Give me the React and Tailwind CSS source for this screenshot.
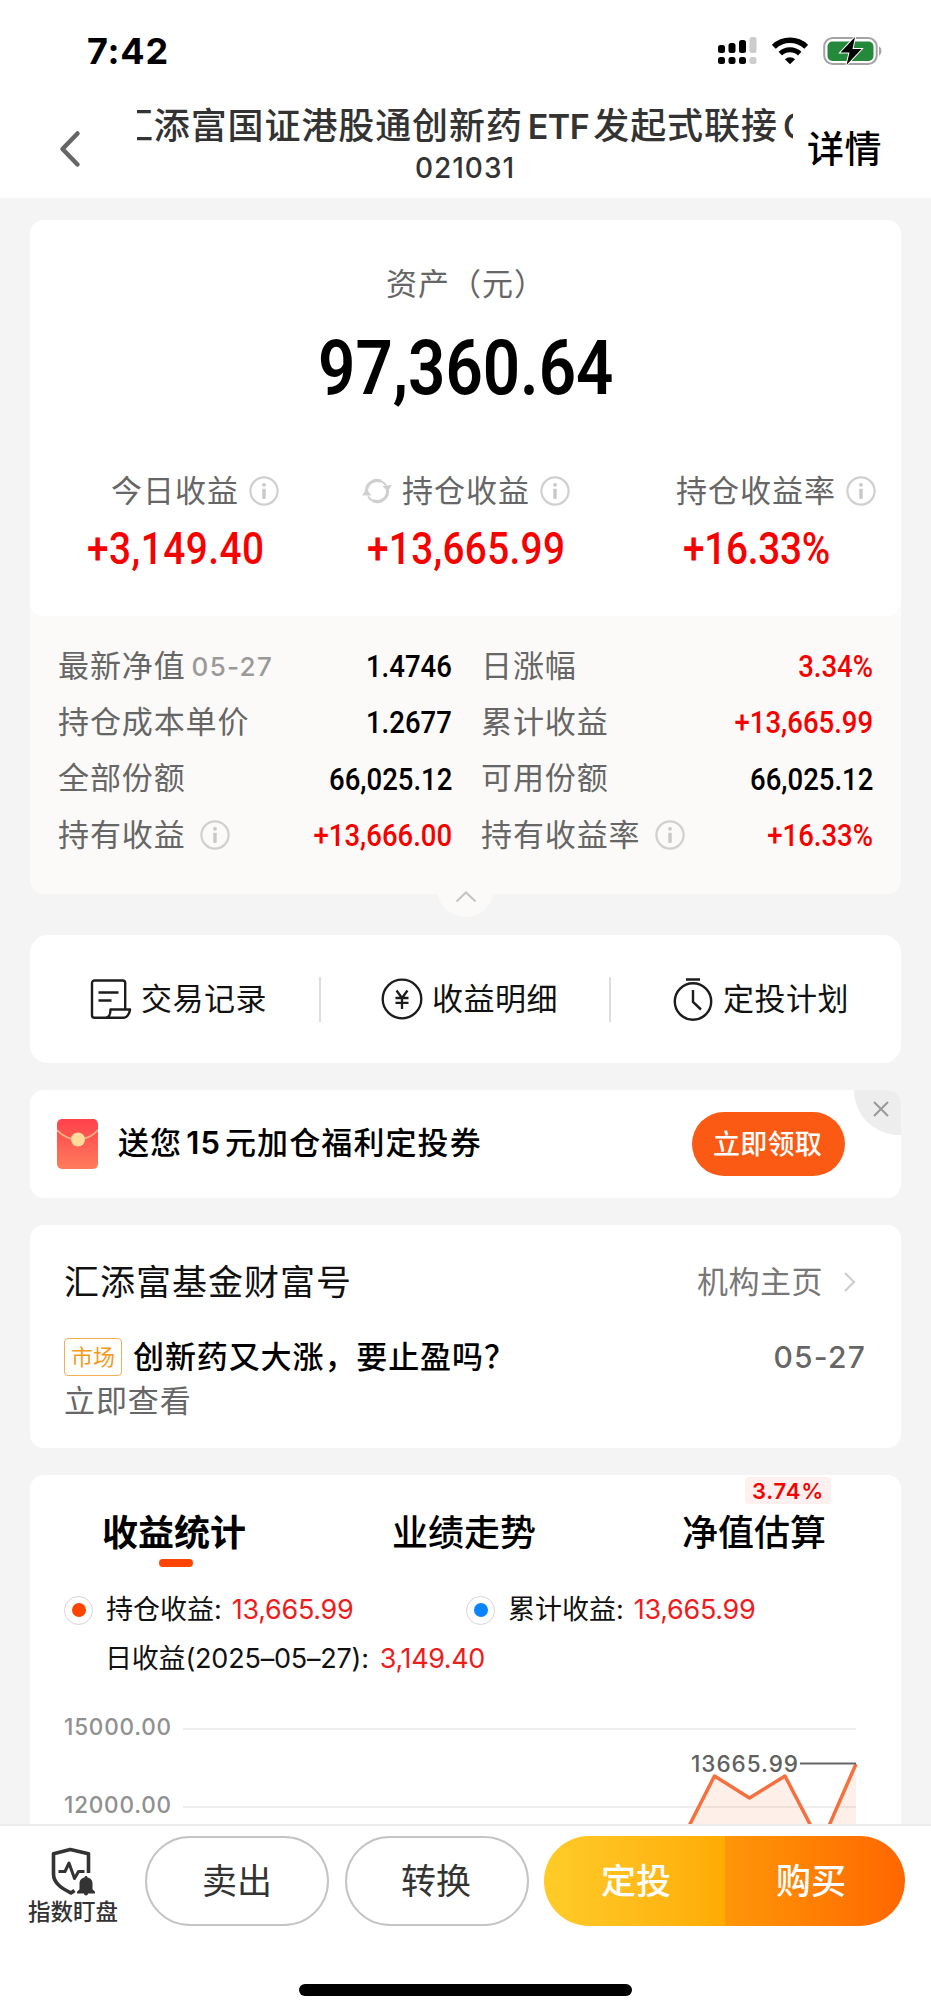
import React from "react";

const InfoIcon = ({ className = "" }) => (
  <svg className={`shrink-0 ${className}`} width="30" height="30" viewBox="0 0 30 30" fill="none">
    <circle cx="15" cy="15" r="13.6" stroke="#d0d0d0" strokeWidth="2.2" />
    <circle cx="15" cy="8.8" r="1.9" fill="#c8c8c8" />
    <path d="M15 12.8v10" stroke="#c8c8c8" strokeWidth="3.4" />
  </svg>
);

const RefreshIcon = () => (
  <svg className="shrink-0" width="30" height="28" viewBox="0 0 30 28" fill="none">
    <path d="M4.500 14A10.500 10.500 0 0 1 19 4.200" stroke="#cfcfcf" strokeWidth="3.200" />
    <path d="M19 4.200A10.500 10.500 0 0 1 24 8.500" stroke="#cfcfcf" strokeWidth="2" />
    <path d="M25.500 13A10.500 10.500 0 0 1 11 23.800" stroke="#cfcfcf" strokeWidth="3.200" />
    <path d="M11 23.800A10.500 10.500 0 0 1 6 19.500" stroke="#cfcfcf" strokeWidth="2" />
    <path d="M0 18.500 4.500 12l5 6.500zM20.500 9l9.500-1-4.500 6.500z" fill="#cfcfcf" />
  </svg>
);

// Numbers set in a narrow DIN-like face
const Num = ({ children, className = "" }) => (
  <span className={`inline-block scale-x-[0.86] whitespace-nowrap font-[Roboto,sans-serif] font-medium ${className}`}>
    {children}
  </span>
);

const StatusBar = () => (
  <div className="flex h-[102px] items-center justify-between pr-[49px] pl-[87px]">
    <span className="text-[36px] font-bold leading-none tracking-[0.800px] text-black">7:42</span>
    <div className="flex items-center">
      <svg width="40" height="30" viewBox="0 0 40 30">
        <rect x="1" y="9" width="7" height="8" rx="2.500" />
        <rect x="11.500" y="7" width="7" height="10" rx="2.500" />
        <rect x="22" y="4" width="7" height="13" rx="2.500" />
        <rect x="32.500" y="1" width="7" height="16" rx="2.500" fill="#ccc" />
        <rect x="1" y="21" width="7" height="7" rx="2.500" />
        <rect x="11.500" y="21" width="7" height="7" rx="2.500" />
        <rect x="22" y="21" width="7" height="7" rx="2.500" />
        <rect x="32.500" y="21" width="7" height="7" rx="2.500" fill="#ccc" />
      </svg>
      <svg className="ml-[15px]" width="36" height="28" viewBox="0 0 36 28" fill="none" stroke="#000">
        <path d="M1.800 9.800a23.500 23.500 0 0 1 32.400 0" strokeWidth="5.600" />
        <path d="M8.300 16.600a14 14 0 0 1 19.400 0" strokeWidth="5" />
        <path d="M12.900 22.300a7.500 7.500 0 0 1 10.200 0L18 27.300z" fill="#000" stroke="none" />
      </svg>
      <svg className="ml-[15px]" width="59" height="30" viewBox="0 0 59 30">
        <rect x="1.200" y="2" width="52.500" height="26" rx="8.500" fill="none" stroke="#a3a3a3" strokeWidth="2" />
        <rect x="4.500" y="5.500" width="46" height="19.500" rx="5" fill="#24893a" />
        <path d="M56 10.500c3.200 1.200 3.200 7.800 0 9z" fill="#a3a3a3" />
        <path d="M32 1 17.500 16.500h9L23.500 29 38.500 13h-9z" fill="#000" stroke="#fff" strokeWidth="2" paintOrder="stroke" />
      </svg>
    </div>
  </div>
);

const Header = () => (
  <div className="flex h-24 pl-[59px]">
    <svg className="mt-[28px] shrink-0" width="22" height="38" viewBox="0 0 22 38" fill="none">
      <path d="M18.500 3.500 3.500 19l15 15.500" stroke="#666" strokeWidth="4.500" strokeLinecap="round" strokeLinejoin="round" />
    </svg>
    <div className="ml-[56px] flex w-[656px] flex-col items-center overflow-hidden text-[#333]">
      <div className="flex h-[48px] w-full items-center justify-center whitespace-nowrap pr-[3px] text-[36px] font-medium tracking-[0.900px]">
        汇添富国证港股通创新药
        <span className="mr-[4px] ml-[5px] text-[34px] font-semibold tracking-[-0.500px]">ETF</span>
        发起式联接
        <span className="ml-[5px]">C</span>
      </div>
      <div className="flex h-[36px] items-center pb-px text-[28px] font-medium leading-none tracking-[1px]">021031</div>
    </div>
    <div className="mt-[23px] ml-[14px] text-[37px] font-medium leading-[50px] tracking-[0.500px] text-black">详情</div>
  </div>
);

const details = [
  { label: "最新净值", date: "05-27", value: "1.4746" },
  { label: "日涨幅", value: "3.34%", red: true },
  { label: "持仓成本单价", value: "1.2677" },
  { label: "累计收益", value: "+13,665.99", red: true },
  { label: "全部份额", value: "66,025.12" },
  { label: "可用份额", value: "66,025.12" },
  { label: "持有收益", value: "+13,666.00", red: true, info: true },
  { label: "持有收益率", value: "+16.33%", red: true, info: true },
];

const AssetCard = () => (
  <section className="relative h-[674px] rounded-[14px] bg-[#fbfaf8]">
    <div className="h-[396px] rounded-[14px] bg-white pt-[43px]">
      <div className="pl-[356px] text-[31px] leading-[42px] tracking-[1px] text-[#666]">资产（元）</div>
      <div className="mt-[17px] flex h-[92px] items-center justify-center">
        <Num className="text-[76px] leading-none font-semibold text-black">97,360.64</Num>
      </div>
      <div className="mt-[56px] flex h-[42px] items-center text-[31px] tracking-[1px] text-[#666]">
        <div className="flex w-[332px] items-center pl-[81px]">
          今日收益
          <InfoIcon className="ml-[10px]" />
        </div>
        <div className="flex w-[314px] items-center gap-[10px]">
          <RefreshIcon />
          <span>持仓收益</span>
          <InfoIcon />
        </div>
        <div className="flex items-center gap-[10px]">
          <span>持仓收益率</span>
          <InfoIcon />
        </div>
      </div>
      <div className="mt-[10px] flex h-[52px] items-center text-[45px] leading-none text-[#f60000]">
        <div className="w-[337px] pl-[57px]">
          <Num className="origin-left tracking-[0.600px]">+3,149.40</Num>
        </div>
        <div className="w-[316px]">
          <Num className="origin-left tracking-[0.400px]">+13,665.99</Num>
        </div>
        <Num className="origin-left tracking-[-0.300px]">+16.33%</Num>
      </div>
    </div>
    <div className="grid grid-cols-[394px_392px] gap-x-[29px] pt-[22px] pl-[28px]">
      {details.map((item) => (
        <div key={item.label} className="flex h-[56.300px] items-center text-[31px] tracking-[0.900px] text-[#666]">
          {item.label}
          {item.date && <span className="ml-[6px] text-[26px] font-medium tracking-[1.300px] text-[#999]">{item.date}</span>}
          {item.info && <InfoIcon className="ml-[14px]" />}
          <Num
            className={`ml-auto origin-right text-[32px] tracking-normal ${item.red ? "text-[#f60000]" : "text-black"}`}
          >
            {item.value}
          </Num>
        </div>
      ))}
    </div>
    <div className="absolute bottom-[-23px] left-[407px] flex h-[57px] w-[57px] justify-center rounded-full bg-[#fbfaf8] pt-[30px]">
      <svg width="22" height="14" viewBox="0 0 22 14" fill="none">
        <path d="m1.500 11.500 9.500-9 9.500 9" stroke="#c4c4c4" strokeWidth="2" />
      </svg>
    </div>
  </section>
);

const Shortcuts = () => (
  <section className="mt-[41px] flex h-[128px] items-center rounded-[18px] bg-white text-[31px] tracking-[0.500px] text-[#111]">
    <div className="flex w-[289px] items-center pl-[60px]">
      <svg width="42" height="42" viewBox="0 0 42 42" fill="none" stroke="#1c1c1c" strokeWidth="2.400" strokeLinejoin="round">
        <path d="M35.200 31V5a2.500 2.500 0 0 0-2.500-2.500H4.500A2.500 2.500 0 0 0 2 5v32.200a2.500 2.500 0 0 0 2.500 2.500H34c3 0 5.500-4 6-8.200H20.500c0 4-1.500 8.200-5 8.200" />
        <path d="M8.500 14.500h20M8.500 22.500h13" />
      </svg>
      <span className="ml-[9px]">交易记录</span>
    </div>
    <div className="h-[45px] w-[2px] bg-[#ddd]" />
    <div className="flex w-[288px] items-center pl-[60px]">
      <svg width="42" height="42" viewBox="0 0 42 42" fill="none" stroke="#1c1c1c" strokeWidth="2.300">
        <circle cx="21" cy="21" r="19.300" />
        <path d="m15.500 12.500 5.500 7.500 5.500-7.500M21 20v11M14.500 20h13M14.500 24.800h13" />
      </svg>
      <span className="ml-[9px]">收益明细</span>
    </div>
    <div className="h-[45px] w-[2px] bg-[#ddd]" />
    <div className="flex items-center pl-[61px]">
      <svg width="42" height="44" viewBox="0 0 42 44" fill="none" stroke="#1c1c1c" strokeWidth="2.400">
        <circle cx="21" cy="24.500" r="18.200" />
        <path d="M14 2.500h14M21 13v12l8 7.500" />
      </svg>
      <span className="ml-[9px]">定投计划</span>
    </div>
  </section>
);

const Coupon = () => (
  <section className="relative mt-[27px] flex h-[108px] items-center overflow-hidden rounded-[14px] bg-white pl-[27px]">
    <svg width="41" height="50" viewBox="0 0 41 50" fill="none">
      <defs>
        <linearGradient id="packet" x1="0" y1="0" x2="0" y2="1">
          <stop offset="0" stopColor="#ff414b" />
          <stop offset="1" stopColor="#ff7c5c" />
        </linearGradient>
      </defs>
      <rect width="41" height="50" rx="5" fill="url(#packet)" />
      <path d="M0 11c11 12.500 30 12.500 41 0" stroke="#ffb486" strokeWidth="1.800" />
      <circle cx="21" cy="20.500" r="7" fill="#ffdc9b" />
    </svg>
    <div className="ml-[20px] pb-[2px] text-[31px] font-medium tracking-[1.100px] text-black">
      送您<span className="mx-[4px] font-semibold">15</span>元加仓福利定投券
    </div>
    <button className="ml-auto mr-[56px] h-[64px] w-[153px] rounded-full bg-[#fb5a14] pt-[3px] pr-[2px] text-[27px] font-medium tracking-[0.300px] text-white">
      立即领取
    </button>
    <div className="absolute top-0 right-0 flex h-[45px] w-[47px] items-center justify-center rounded-bl-[46px] bg-[#ededed] pb-[7px] pl-[7px]">
      <svg width="16" height="16" viewBox="0 0 16 16">
        <path d="m1 1 14 14M15 1 1 15" stroke="#999" strokeWidth="2" />
      </svg>
    </div>
  </section>
);

const OrgCard = () => (
  <section className="mt-[27px] h-[223px] rounded-[14px] bg-white pt-[32px] pr-[37px] pl-[34px]">
    <div className="flex h-[50px] items-center justify-between">
      <span className="text-[35px] tracking-[1px] text-[#111]">汇添富基金财富号</span>
      <span className="flex items-center pr-[7px] text-[31px] tracking-[0.500px] text-[#777]">
        机构主页
        <svg className="ml-[20px]" width="14" height="22" viewBox="0 0 14 22" fill="none">
          <path d="m2 2 9 9-9 9" stroke="#ccc" strokeWidth="2" />
        </svg>
      </span>
    </div>
    <div className="mt-[29px] flex h-[42px] items-center">
      <span className="flex h-[38px] w-[58px] items-center justify-center rounded-[4px] border border-[#f3b050] text-[22px] text-[#f39a1e]">
        市场
      </span>
      <span className="ml-[11px] text-[31px] font-medium tracking-[0.900px] text-black">创新药又大涨，要止盈吗？</span>
      <span className="mr-[-2px] ml-auto text-[30px] font-medium tracking-[1.200px] text-[#666]">05-27</span>
    </div>
    <div className="mt-[2px] text-[31px] leading-[42px] tracking-[0.900px] text-[#666]">立即查看</div>
  </section>
);

const Legend = ({ dot, label, value }) => (
  <div className="flex w-[402px] items-center">
    <span className="flex h-[29px] w-[29px] items-center justify-center rounded-full border border-[#d5d5d8]">
      <span className={`h-[14px] w-[14px] rounded-full ${dot}`} />
    </span>
    <span className="ml-[13px]">{label}:</span>
    <span className="ml-[10px] tracking-[-0.300px] text-[#ee1c1c]">{value}</span>
  </div>
);

const StatsCard = () => (
  <section className="mt-[27px] h-[349px] overflow-hidden rounded-t-[14px] bg-white">
    <div className="flex h-[95px] items-start pt-[33px] pl-[72px] text-[36px] font-medium leading-[50px] text-black">
      <div className="flex w-[290px] flex-col">
        <span className="font-semibold">收益统计</span>
        <span className="mt-[1px] ml-[57px] h-[8px] w-[34px] rounded-full bg-[#ff4400]" />
      </div>
      <div className="w-[290px]">业绩走势</div>
      <div className="relative">
        净值估算
        <span className="absolute top-[-31px] left-[63px] h-[27px] w-[86px] rounded-[4px] bg-[#fff0f0] pt-px text-center text-[22px] font-semibold leading-[27px] tracking-[0.800px] text-[#f60000]">
          3.74%
        </span>
      </div>
    </div>
    <div className="flex h-[80px] items-center pl-[34px] text-[27px] text-[#111]">
      <Legend dot="bg-[#ff4400]" label="持仓收益" value="13,665.99" />
      <Legend dot="bg-[#0a84ff]" label="累计收益" value="13,665.99" />
    </div>
    <div className="mt-[-11px] flex h-[40px] items-center pl-[75px] text-[27px] tracking-[-0.200px] text-[#111]">
      日收益(2025–05–27):<span className="ml-[11px] tracking-[-0.400px] text-[#ee1c1c]">3,149.40</span>
    </div>
    <svg className="block" width="871" height="145" viewBox="0 0 871 145" fill="none">
      <path d="M153 50h673M153 128h673" stroke="#eeeeee" strokeWidth="2" />
      <path d="M660 145 684.500 97 719.500 119 755 97 780 145zM800 145 826 85v60z" fill="#f96b3a" fillOpacity="0.110" />
      <path d="m658 149 26.500-52 35 22L755 97l27 52M798 149l28-64" stroke="#f66f3e" strokeWidth="3.500" strokeLinejoin="round" />
      <path d="M770 84.500h56" stroke="#666" strokeWidth="2" />
      <g fontFamily="Inter, sans-serif" fontSize="22.5" fontWeight="500">
        <text x="34" y="56" fill="#909090" textLength="107">15000.00</text>
        <text x="34" y="134" fill="#909090" textLength="107">12000.00</text>
        <text x="661" y="93" fill="#606060" textLength="107">13665.99</text>
      </g>
    </svg>
  </section>
);

const Footer = () => (
  <footer className="h-[190px] border-t-2 border-[#ececec] bg-white text-[#333]">
    <div className="flex h-[112px] items-center pb-[2px] pl-[27px]">
      <div className="flex w-[92px] flex-col items-center pt-[10px]">
        <svg width="46" height="50" viewBox="0 0 46 50" fill="none" stroke="#333" strokeLinejoin="round">
          <path d="M38.500 26V6.800L20.300 2.500 3.500 6.800V27c0 10 10 15 17.500 19l3.500-2.500" strokeWidth="3.600" />
          <path d="M8.500 24.500h6.500l4-8.500 5.500 15.500 4-7h6" strokeWidth="3" />
          <path d="M27 46.500v-1.800l2.500-2.500V37c0-4 2-6 5-6.500 0-2 3-2 3 0 3 .5 5 2.500 5 6.500v5.200l2.500 2.500v1.800h-7c0 2.500-4 2.500-4 0z" fill="#333" stroke="none" />
        </svg>
        <span className="mt-[1px] whitespace-nowrap text-[22.500px] font-medium leading-[28px]">指数盯盘</span>
      </div>
      <button className="ml-[26px] h-[90px] w-[184px] rounded-full border-2 border-[#c4c4c4] text-[35px]">卖出</button>
      <button className="ml-[16px] h-[90px] w-[184px] rounded-full border-2 border-[#c4c4c4] pr-[2px] text-[35px]">转换</button>
      <div className="ml-[15px] flex h-[90px] w-[361px] overflow-hidden rounded-full text-[35px] font-medium text-white">
        <button className="w-[181px] bg-linear-to-r from-[#ffcc28] to-[#ffab02] pl-[3px]">定投</button>
        <button className="w-[180px] bg-linear-to-r from-[#ff9608] to-[#ff6600] pr-[8px]">购买</button>
      </div>
    </div>
    <div className="mx-auto mt-[46px] h-[12px] w-[333px] rounded-full bg-black" />
  </footer>
);

const App = () => {
  return (
    <div className="h-[2014px] w-[931px] overflow-hidden bg-[#f4f4f4] font-[Inter,'Noto_Sans_CJK_SC',sans-serif]">
      <div className="bg-white">
        <StatusBar />
        <Header />
      </div>
      <main className="px-[30px] pt-[22px]">
        <AssetCard />
        <Shortcuts />
        <Coupon />
        <OrgCard />
        <StatsCard />
      </main>
      <Footer />
    </div>
  );
};

export default App;
